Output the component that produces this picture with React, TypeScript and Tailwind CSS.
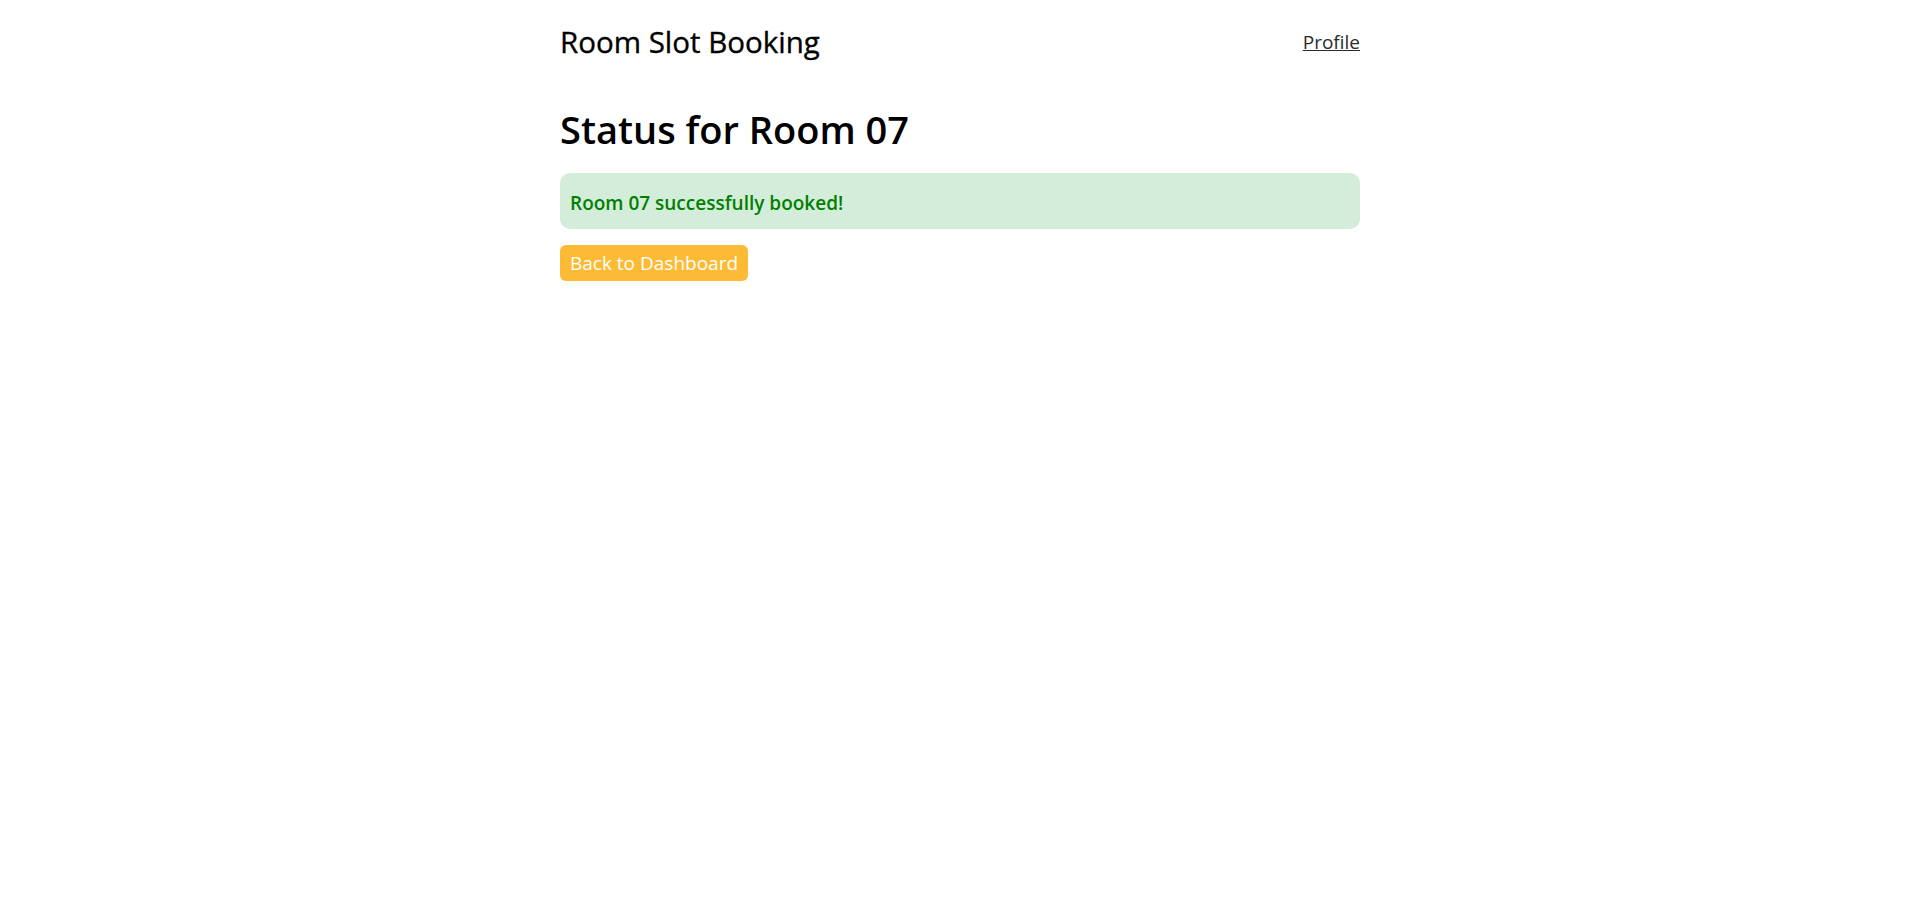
export default function App() {
  return (
    <div className="min-h-screen bg-white" style={{ fontFamily: '"Open Sans", "Noto Sans", sans-serif' }}>
      <div className="mx-auto max-w-[800px]">
        <header className="flex h-[84px] items-center justify-between">
          <div className="text-[29.5px] leading-[36px] text-black [-webkit-text-stroke:0.35px_black]">Room Slot Booking</div>
          <a href="#" className="text-[19px] leading-[24px] text-[#2b2b2b] underline">Profile</a>
        </header>
        <h2 className="mt-[21px] text-[38px] font-semibold leading-[48px] text-black">Status for Room 07</h2>
        <div className="mt-[20px] flex h-[56px] items-center rounded-[10px] bg-[#d4edda] px-[10px] pt-[3px]">
          <p className="text-[19px] font-semibold leading-[24px] text-[#008000]">Room 07 successfully booked!</p>
        </div>
        <button className="mt-4 h-[36px] rounded-[6px] bg-[#fdba35] px-[10px] pt-[1px] text-[19px] leading-[35px] text-white">
          Back to Dashboard
        </button>
      </div>
    </div>
  );
}
